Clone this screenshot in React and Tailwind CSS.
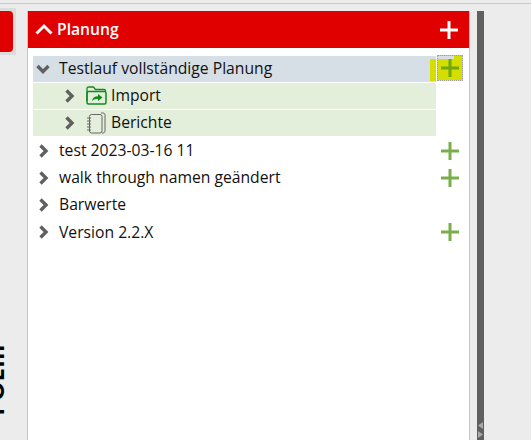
import React from 'react';

const Chevron = ({ open }) => (
    <svg width="14" height="14" viewBox="0 0 14 14" fill="none" stroke="#606060" strokeWidth="3.4" className="shrink-0">
        {open ? <path d="M1.500 4 L7 9.500 L12.500 4" /> : <path d="M4.500 1.500 L10 7 L4.500 12.500" />}
    </svg>
);

const Plus = ({ color = '#7aae4c' }) => (
    <svg width="18" height="18" viewBox="0 0 18 18" className="shrink-0">
        <path d="M7.500 0h3v7.500H18v3h-7.500V18h-3v-7.500H0v-3h7.500z" fill={color} />
    </svg>
);

const FolderIcon = () => (
    <svg width="21" height="19" viewBox="0 0 21 19" fill="none" className="shrink-0">
        <path d="M1 15V2.500C1 1.600 1.600 1 2.500 1h5L9.500 3.500H18c1 0 1.500 .6 1.500 1.500" stroke="#0f8a1f" strokeWidth="1.300" />
        <rect x="1" y="5.500" width="19" height="12.500" rx="1.500" stroke="#0f8a1f" strokeWidth="1.500" />
        <path d="M6 15c.4-3.200 2.500-4.800 6-4.800V8l4.500 3.500L12 15v-2.300c-2.500 0-4.500 .8-6 2.300z" fill="#0f8a1f" />
    </svg>
);

const BookIcon = () => (
    <svg width="20" height="22" viewBox="0 0 20 22" fill="none" stroke="#666666" strokeWidth="1" className="shrink-0">
        <path d="M15 1h2c1.200 0 2 .8 2 2v16c0 1.200-.8 2-2 2h-1" />
        <rect x="3.500" y="2.500" width="12.500" height="18.500" rx="2" />
        <path d="M1 6h4M1 9h4M1 12h4M1 15h4M1 18h4" strokeWidth="1.200" />
    </svg>
);

const Row = ({ label, open, plus, className = '', indent, icon }) => (
    <div className="flex h-[27.3px] items-center">
        <div className={`flex h-[26px] w-[403px] items-center ${indent ? 'pl-[29px]' : 'pl-[3px]'} ${className}`}>
            <Chevron open={open} />
            {icon && <span className="ml-[9px] flex w-[22px] justify-center">{icon}</span>}
            <span className={`text-[15.7px] leading-none text-[#111111] ${icon ? 'ml-[4px]' : 'ml-[9px]'}`}>{label}</span>
        </div>
        <div className="ml-[1px] flex w-[26px] justify-center">{plus && <Plus />}</div>
    </div>
);

export default function App() {
    return (
        <div className="relative flex h-[440px] w-[531px] flex-col overflow-hidden bg-[#ececec] font-['Open_Sans',sans-serif]">
            <div className="mt-[3px] h-px w-full bg-[#c8c8c8]" />
            <div className="flex min-h-0 flex-1 pt-[7px]">
                <div className="-mt-[3px] h-[47px] w-[16px] bg-[#dcdcdc] pt-[3px]">
                    <div className="h-[41px] w-[13px] rounded-r-[4px] bg-[#e10000]" />
                </div>
                <div className="ml-[11px] flex w-[443px] flex-col border-x border-[#c4c4c4] bg-white">
                    <div className="flex h-[37px] items-center justify-between bg-[#e10000] pr-[11px] pl-[7px]">
                        <div className="flex items-center gap-[4px]">
                            <svg width="18" height="12" viewBox="0 0 18 12" fill="none" stroke="#f4f4f4" strokeWidth="3">
                                <path d="M1.500 10.500 L9 3 L16.500 10.500" />
                            </svg>
                            <span className="text-[15.7px] font-semibold text-white">Planung</span>
                        </div>
                        <Plus color="#ffffff" />
                    </div>
                    <div className="relative flex flex-col pt-[7px] pl-[5px]">
                        <Row label="Testlauf vollständige Planung" open className="bg-[#d6dee6]" />
                        <Row label="Import" indent icon={<FolderIcon />} className="bg-[#e3efdb]" />
                        <Row label="Berichte" indent icon={<BookIcon />} className="bg-[#e3efdb]" />
                        <Row label="test 2023-03-16 11" plus />
                        <Row label="walk through namen geändert" plus />
                        <Row label="Barwerte" />
                        <Row label="Version 2.2.X" plus />

                        {/* highlighted add button */}
                        <div className="absolute top-[11px] left-[402px] h-[22px] w-[6px] bg-[#d6de00]" />
                        <div className="absolute top-[7px] left-[409px] flex h-[26px] w-[26px] items-center justify-center border border-dotted border-[#a0a0a0] bg-[linear-gradient(to_bottom,#d6dee6_0,#d6dee6_3px,#d6de00_3px)]">
                            <div className="absolute top-0 right-0 h-[3px] w-[8px] bg-[#d6de00]" />
                            <Plus color="#6fa80f" />
                        </div>
                    </div>
                </div>
                <div className="ml-[7px] flex w-[7px] flex-col items-center justify-end gap-[2px] bg-[#606060] pb-[2px]">
                    <svg width="5" height="7" viewBox="0 0 5 7"><path d="M5 0v7L0 3.500z" fill="#a8a8a8" /></svg>
                    <svg width="5" height="7" viewBox="0 0 5 7"><path d="M0 0v7l5-3.500z" fill="#a8a8a8" /></svg>
                </div>
            </div>
            <span className="absolute top-[368px] left-[-41px] origin-center -rotate-90 text-[24px] leading-none font-bold whitespace-nowrap text-black">POEIII</span>
        </div>
    );
}
